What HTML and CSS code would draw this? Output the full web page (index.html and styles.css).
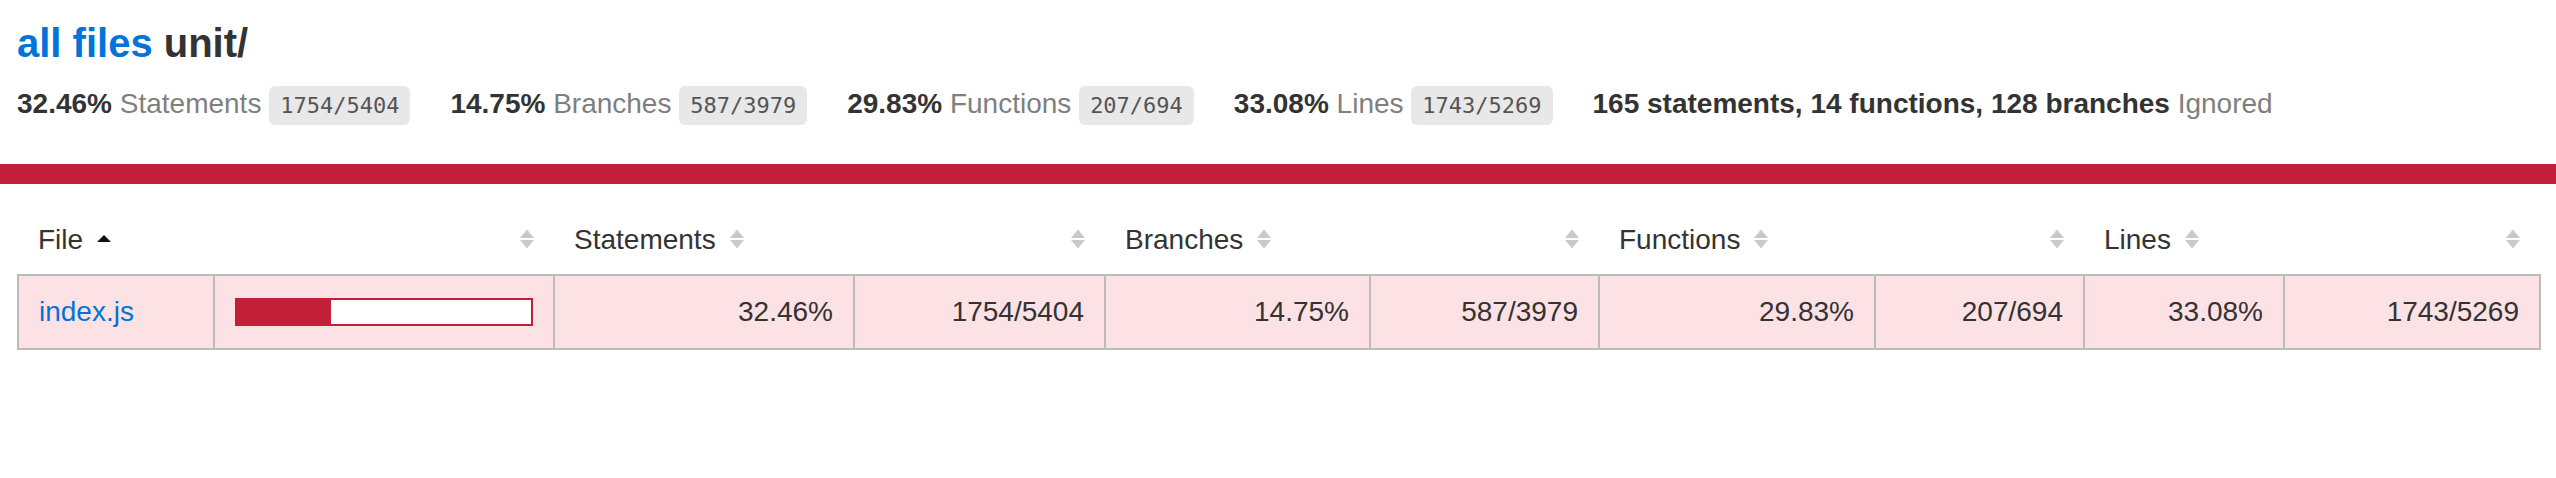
FILE: index.html
```html
<!DOCTYPE html>
<html lang="en">
<head>
<meta charset="utf-8">
<title>Code coverage report for unit/</title>
<link rel="stylesheet" href="styles.css">
</head>
<body>
<div class="wrapper">
  <div class="pad1 summary">
    <h1><a href="#">all files</a> unit/</h1>
    <div class="stats">
      <div class="stat"><span class="strong">32.46% </span><span class="quiet">Statements</span> <span class="fraction">1754/5404</span></div>
      <div class="stat"><span class="strong">14.75% </span><span class="quiet">Branches</span> <span class="fraction">587/3979</span></div>
      <div class="stat"><span class="strong">29.83% </span><span class="quiet">Functions</span> <span class="fraction">207/694</span></div>
      <div class="stat"><span class="strong">33.08% </span><span class="quiet">Lines</span> <span class="fraction">1743/5269</span></div>
      <div class="stat"><span class="strong">165 statements, 14 functions, 128 branches</span> <span class="quiet">Ignored</span></div>
    </div>
  </div>
  <div class="status-line low"></div>
  <div class="pad1 table-wrap">
    <table class="coverage-summary">
      <colgroup>
        <col class="c-file"><col class="c-pic"><col class="c-spct"><col class="c-sabs"><col class="c-bpct"><col class="c-babs"><col class="c-fpct"><col class="c-fabs"><col class="c-lpct"><col class="c-labs">
      </colgroup>
      <thead>
        <tr>
          <th class="file sorted">File<svg class="sorter" viewBox="0 0 14 20"><polygon class="dark" points="0,13 7,6 14,13"/></svg></th>
          <th class="pic"><svg class="sorter" viewBox="0 0 14 20"><polygon points="0,9 7,0.5 14,9"/><polygon points="0,11 7,19.5 14,11"/></svg></th>
          <th class="pct">Statements<svg class="sorter" viewBox="0 0 14 20"><polygon points="0,9 7,0.5 14,9"/><polygon points="0,11 7,19.5 14,11"/></svg></th>
          <th class="abs"><svg class="sorter" viewBox="0 0 14 20"><polygon points="0,9 7,0.5 14,9"/><polygon points="0,11 7,19.5 14,11"/></svg></th>
          <th class="pct">Branches<svg class="sorter" viewBox="0 0 14 20"><polygon points="0,9 7,0.5 14,9"/><polygon points="0,11 7,19.5 14,11"/></svg></th>
          <th class="abs"><svg class="sorter" viewBox="0 0 14 20"><polygon points="0,9 7,0.5 14,9"/><polygon points="0,11 7,19.5 14,11"/></svg></th>
          <th class="pct">Functions<svg class="sorter" viewBox="0 0 14 20"><polygon points="0,9 7,0.5 14,9"/><polygon points="0,11 7,19.5 14,11"/></svg></th>
          <th class="abs"><svg class="sorter" viewBox="0 0 14 20"><polygon points="0,9 7,0.5 14,9"/><polygon points="0,11 7,19.5 14,11"/></svg></th>
          <th class="pct">Lines<svg class="sorter" viewBox="0 0 14 20"><polygon points="0,9 7,0.5 14,9"/><polygon points="0,11 7,19.5 14,11"/></svg></th>
          <th class="abs"><svg class="sorter" viewBox="0 0 14 20"><polygon points="0,9 7,0.5 14,9"/><polygon points="0,11 7,19.5 14,11"/></svg></th>
        </tr>
      </thead>
      <tbody>
        <tr>
          <td class="file low"><a href="#">index.js</a></td>
          <td class="pic low"><div class="chart"><div class="cover-fill" style="width: 32%;"></div><div class="cover-empty" style="width: 68%;"></div></div></td>
          <td class="pct low">32.46%</td>
          <td class="abs low">1754/5404</td>
          <td class="pct low">14.75%</td>
          <td class="abs low">587/3979</td>
          <td class="pct low">29.83%</td>
          <td class="abs low">207/694</td>
          <td class="pct low">33.08%</td>
          <td class="abs low">1743/5269</td>
        </tr>
      </tbody>
    </table>
  </div>
</div>
</body>
</html>
```
FILE: styles.css
```css
*, *::before, *::after { box-sizing: border-box; }

html, body {
  margin: 0;
  padding: 0;
}

body {
  font-family: "Liberation Sans", Arial, Helvetica, sans-serif;
  font-size: 28px;
  line-height: 32px;
  color: #333;
  background: #fff;
}

a {
  color: #0074D9;
  text-decoration: none;
}

.pad1 {
  padding: 20px 17px;
}

h1 {
  font-size: 40px;
  line-height: 46px;
  margin: 0;
  font-weight: bold;
}

.stats {
  display: flex;
  padding: 20px 0;
  line-height: 36px;
}

.stat {
  margin-right: 40px;
  white-space: nowrap;
}

.strong { font-weight: bold; }

.quiet { color: #7f7f7f; }

.fraction {
  font-family: "DejaVu Sans Mono", "Liberation Mono", monospace;
  font-size: 22px;
  color: #555;
  background: #E8E8E8;
  padding: 7px 11px;
  border-radius: 6px;
}

.status-line {
  height: 20px;
}

.status-line.low { background: #C21F39; }

.coverage-summary {
  border-collapse: collapse;
  table-layout: fixed;
  width: 100%;
}

.c-file { width: 196px; }
.c-pic { width: 340px; }
.c-spct { width: 300px; }
.c-sabs { width: 251px; }
.c-bpct { width: 265px; }
.c-babs { width: 229px; }
.c-fpct { width: 276px; }
.c-fabs { width: 209px; }
.c-lpct { width: 200px; }
.c-labs { width: 256px; }

.coverage-summary tbody {
  border: 2px solid #bbb;
}

.coverage-summary tbody tr {
  border-bottom: 2px solid #bbb;
}

.coverage-summary th,
.coverage-summary td {
  padding: 20px;
  line-height: 32px;
}

.coverage-summary th {
  padding-bottom: 18px;
  text-align: left;
  font-weight: normal;
  white-space: nowrap;
}

.coverage-summary th.pic,
.coverage-summary th.abs,
.coverage-summary td.pct,
.coverage-summary td.abs {
  text-align: right;
}

.coverage-summary td {
  border-right: 2px solid #bbb;
  white-space: nowrap;
}

.coverage-summary td:last-child {
  border-right: none;
}

.low { background: #FCE1E5; }

.sorter {
  display: inline-block;
  width: 14px;
  height: 20px;
  margin-left: 14px;
  vertical-align: baseline;
  fill: #c9c9c9;
}

.sorter .dark { fill: #111; }

.chart {
  display: flex;
  border: 2px solid #C21F39;
  line-height: 0;
}

.cover-fill,
.cover-empty {
  height: 24px;
}

.cover-fill { background: #C21F39; }
.cover-empty { background: #fff; }
```
